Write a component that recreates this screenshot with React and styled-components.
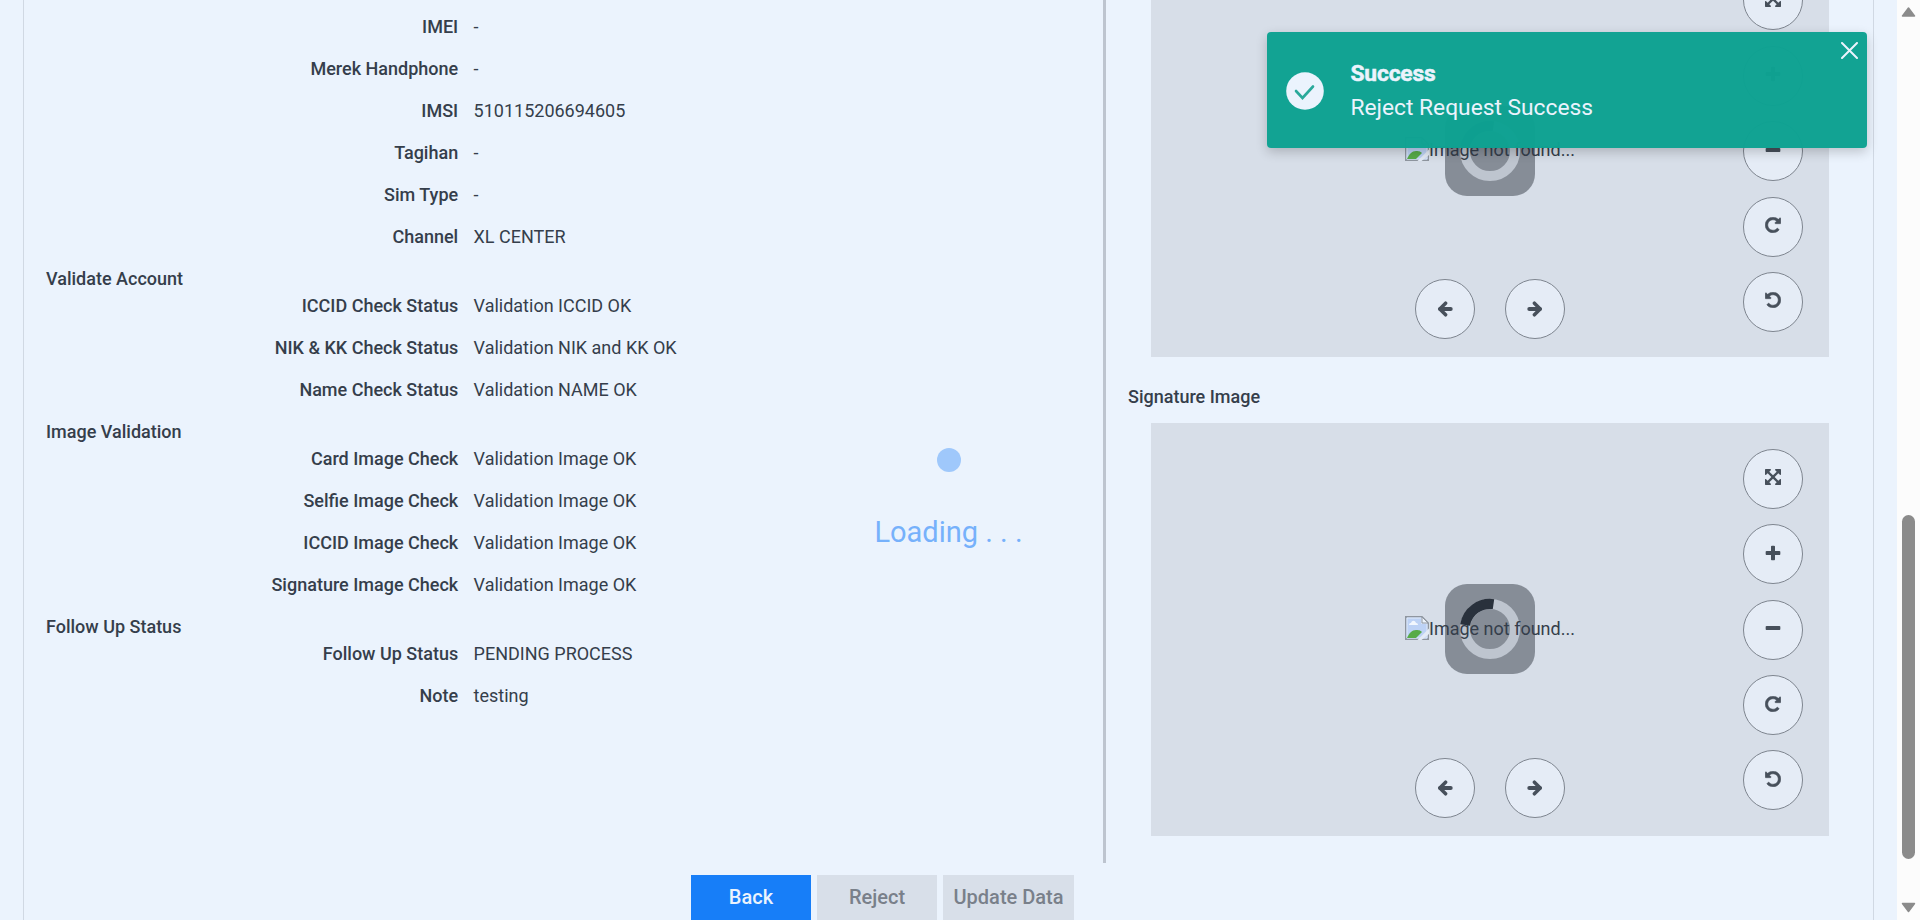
import React from "react";
import styled, { createGlobalStyle, css } from "styled-components";

const Global = createGlobalStyle`
  * { box-sizing: border-box; }
  html, body { margin: 0; height: 100%; overflow: hidden; }
  body { font-family: Roboto, "Liberation Sans", sans-serif; font-size: 18px; line-height: 27px; color: #353e4b; background: #ebf3fd; }
`;

const Page = styled.div`
  position: relative;
  display: flex;
  height: 920px;
  overflow: hidden;
`;
const Main = styled.main`
  flex: 1;
  padding: 0 23px 0 23px;
`;
const Card = styled.section`
  height: 920px;
  border: 1px solid #d0d8e3;
  border-width: 0 1px;
  overflow: hidden;
`;
const Columns = styled.div`
  display: flex;
  height: 863px;
  overflow: hidden;
`;
const Details = styled.div`
  width: 1082px;
  padding: 13px 22px 0;
  border-right: 3px solid #bdc4cf;
`;
const SectionTitle = styled.h2`
  margin: 0;
  font-size: 18px;
  line-height: 27px;
  font-weight: 500;
`;
const Row = styled.div`
  display: flex;
  gap: 15.4px;
  height: 42px;
`;
const Label = styled.div`
  width: 412.2px;
  text-align: right;
  font-weight: 500;
`;
const Value = styled.div``;

const Images = styled.div`
  flex: 1;
  padding: 0 22px;
  display: flex;
  flex-direction: column;
  margin-top: -55.55px;
`;
const ImageTitle = styled(SectionTitle)`
  margin: 25.5px 0 13px;
`;
const Viewer = styled.div`
  position: relative;
  flex: none;
  width: 678px;
  height: 413px;
  margin-left: 23px;
  background: #d7dee8;
`;
const Tools = styled.div`
  position: absolute;
  top: 26px;
  right: 26px;
  display: flex;
  flex-direction: column;
  gap: 15.37px;
`;
const Nav = styled.div`
  position: absolute;
  left: 264px;
  top: 334.75px;
  display: flex;
  gap: 30px;
`;
const RoundButton = styled.button`
  display: flex;
  align-items: center;
  justify-content: center;
  width: 60px;
  height: 60px;
  padding: 0 0 3px;
  border: 1px solid #7e858f;
  border-radius: 50%;
  background: #e5ecf6;
  color: #47505b;
  ${(p) => p.$centered && css`padding: 0;`}
`;
const Spinner = styled.div`
  position: absolute;
  left: 294px;
  top: 161.15px;
  width: 90px;
  height: 90px;
  border-radius: 22px;
  background: #868d97;
  svg { display: block; }
`;
const Missing = styled.div`
  position: absolute;
  left: 254px;
  top: 192px;
  display: flex;
  white-space: nowrap;
  svg { margin-top: 1px; }
`;

const Actions = styled.div`
  display: flex;
  gap: 6px;
  margin: 12px 0 0 667px;
`;
const ActionButton = styled.button`
  height: 56px;
  min-width: 120px;
  padding: 0 10.5px 11px;
  border: 0;
  font: 500 20px/45px Roboto, sans-serif;
  background: ${(p) => (p.$primary ? "#177ef8" : "#d8dfe9")};
  color: ${(p) => (p.$primary ? "#ebf3fd" : "#79808a")};
`;

const Loader = styled.div`
  position: absolute;
  left: 0;
  top: 448px;
  width: 1897px;
  display: flex;
  flex-direction: column;
  align-items: center;
  color: #76b1fb;
  font-size: 29px;
  line-height: 45px;
`;
const Dot = styled.span`
  width: 24px;
  height: 24px;
  margin-bottom: 38px;
  border-radius: 50%;
  background: #9fc8fb;
`;

const Toast = styled.aside`
  position: absolute;
  left: 1267px;
  top: 32px;
  width: 600px;
  height: 116px;
  display: flex;
  align-items: center;
  padding: 1px 0 0 18.5px;
  border-radius: 4px;
  background: rgba(14, 162, 145, 0.985);
  color: #ebf3fd;
  box-shadow: 0 4px 12px rgba(0, 0, 0, 0.2);
`;
const ToastText = styled.div`
  margin-left: 27px;
  font-size: 22.75px;
  line-height: 34px;
`;
const ToastTitle = styled.div`
  font-weight: 700;
  letter-spacing: -0.15px;
  -webkit-text-stroke: 0.5px currentColor;
`;
const Close = styled.button`
  position: absolute;
  top: 10px;
  right: 9.5px;
  padding: 0;
  border: 0;
  background: none;
  color: #ebf3fd;
  svg { display: block; }
`;

const ScrollTrack = styled.div`
  width: 23px;
  padding: 7px 0;
  display: flex;
  flex-direction: column;
  align-items: center;
  background: #fcfcfc;
`;
const Thumb = styled.div`
  width: 13px;
  height: 344px;
  margin: 498px 0 auto;
  border-radius: 7px;
  background: #8b8b8b;
`;

const paths = {
  expand: "M1283 413L928 768l355 355l144-144q29-31 70-14q39 17 39 59v448q0 26-19 45t-45 19h-448q-42 0-59-40q-17-39 14-69l144-144l-355-355l-355 355l144 144q31 30 14 69q-17 40-59 40H64q-26 0-45-19t-19-45v-448q0-42 40-59q39-17 69 14l144 144l355-355l-355-355l-144 144q-19 19-45 19q-12 0-24-5q-40-17-40-59V64q0-26 19-45T64 0h448q42 0 59 40q17 39-14 69L413 253l355 355l355-355l-144-144q-31-30-14-69q17-40 59-40h448q26 0 45 19t19 45v448q0 42-39 59q-13 5-25 5q-26 0-45-19z",
  plus: "M1472 672v192q0 40-28 68t-68 28H960v416q0 40-28 68t-68 28H672q-40 0-68-28t-28-68V960H160q-40 0-68-28t-28-68V672q0-40 28-68t68-28h416V160q0-40 28-68t68-28h192q40 0 68 28t28 68v416h416q40 0 68 28t28 68z",
  minus: "M1472 672v192q0 40-28 68t-68 28H160q-40 0-68-28t-28-68V672q0-40 28-68t68-28h1216q40 0 68 28t28 68z",
  redo: "M1536 128v448q0 26-19 45t-45 19h-448q-42 0-59-40q-17-39 14-69l138-138Q969 256 768 256q-104 0-198.500 40.500T406 406T296.500 569.500T256 768t40.500 198.500T406 1130t163.500 109.500T768 1280q119 0 225-52t179-147q7-10 23-12q15 0 25 9l137 138q9 8 9.500 20.500t-7.500 22.500q-109 132-264 204.500T768 1536q-156 0-298-61t-245-164t-164-245T0 768t61-298t164-245T470 61T768 0q147 0 284.500 55.500T1297 212l130-129q29-31 70-14q39 17 39 59z",
};

function Icon({ name, flip, heavy }) {
  return (
    <svg
      width="16"
      height="16"
      viewBox={heavy ? "-20 -20 1576 1576" : "0 0 1536 1536"}
      fill="currentColor"
      stroke="currentColor"
      strokeWidth={heavy ? 50 : 0}
    >
      <path d={paths[name]} transform={flip ? "matrix(-1 0 0 1 1536 0)" : undefined} />
    </svg>
  );
}

function Arrow({ flip }) {
  return (
    <svg width="16" height="16" viewBox="0 0 16 16" fill="none" stroke="currentColor" strokeLinecap="round" strokeLinejoin="round">
      <g transform={flip ? "matrix(-1 0 0 1 16 0)" : undefined}>
        <path d="M8.600 2.200L2.800 8l5.800 5.800" strokeWidth="3.500" />
        <path d="M3.200 8H13.700" strokeWidth="4" />
      </g>
    </svg>
  );
}

function BrokenImage() {
  return (
    <svg width="24" height="24" viewBox="0 0 24 24">
      <path d="M.75.75H17L23.250 7v16.250H.75z" fill="#bdd2f5" stroke="#8f969f" strokeWidth="1.500" />
      <path d="M2 2h14.500v5.500H22V22H2z" fill="none" stroke="#dfe9f8" />
      <path d="M2 22c2-5 5-8 9-8s5 1 6 2l-6 6z" fill="#57ab48" />
      <path d="M4 9c0-2 2-2 2-2c1-3 4-3 5 0c2 0 2 2 2 2z" fill="#f2f7fe" />
      <path d="M17 1v6h6z" fill="#eef4fc" stroke="#8f969f" />
      <path d="M24 12.500L12.500 24h4l7.500-6z" fill="#e4ebf5" />
    </svg>
  );
}

function ImageViewer() {
  return (
    <Viewer>
      <Spinner>
        <svg width="90" height="90" viewBox="0 0 90 90" fill="none" strokeWidth="10">
          <circle cx="45" cy="45" r="25" stroke="#bec5cf" />
          <path d="M20.100 41A25.200 25.200 0 0 1 48.500 20.150" stroke="#29313c" />
        </svg>
      </Spinner>
      <Missing><BrokenImage />Image not found...</Missing>
      <Tools>
        <RoundButton><Icon name="expand" /></RoundButton>
        <RoundButton><Icon name="plus" /></RoundButton>
        <RoundButton><Icon name="minus" /></RoundButton>
        <RoundButton><Icon name="redo" heavy /></RoundButton>
        <RoundButton><Icon name="redo" heavy flip /></RoundButton>
      </Tools>
      <Nav>
        <RoundButton $centered><Arrow /></RoundButton>
        <RoundButton $centered><Arrow flip /></RoundButton>
      </Nav>
    </Viewer>
  );
}

const sections = [
  { rows: [["IMEI", "-"], ["Merek Handphone", "-"], ["IMSI", "510115206694605"], ["Tagihan", "-"], ["Sim Type", "-"], ["Channel", "XL CENTER"]] },
  { title: "Validate Account", rows: [["ICCID Check Status", "Validation ICCID OK"], ["NIK & KK Check Status", "Validation NIK and KK OK"], ["Name Check Status", "Validation NAME OK"]] },
  { title: "Image Validation", rows: [["Card Image Check", "Validation Image OK"], ["Selfie Image Check", "Validation Image OK"], ["ICCID Image Check", "Validation Image OK"], ["Signature Image Check", "Validation Image OK"]] },
  { title: "Follow Up Status", rows: [["Follow Up Status", "PENDING PROCESS"], ["Note", "testing"]] },
];

export default function App() {
  return (
    <Page>
      <Global />
      <Main>
        <Card>
          <Columns>
            <Details>
              {sections.map((s, i) => (
                <React.Fragment key={i}>
                  {s.title && <SectionTitle>{s.title}</SectionTitle>}
                  {s.rows.map(([label, value]) => (
                    <Row key={label}><Label>{label}</Label><Value>{value}</Value></Row>
                  ))}
                </React.Fragment>
              ))}
            </Details>
            <Images>
              <ImageViewer />
              <ImageTitle>Signature Image</ImageTitle>
              <ImageViewer />
            </Images>
          </Columns>
          <Actions>
            <ActionButton $primary>Back</ActionButton>
            <ActionButton>Reject</ActionButton>
            <ActionButton>Update Data</ActionButton>
          </Actions>
        </Card>
      </Main>
      <ScrollTrack>
        <svg width="15" height="10" viewBox="0 0 15 10"><path d="M7.500 1L13.500 9H1.500z" fill="#8b8b8b" stroke="#8b8b8b" strokeLinejoin="round" strokeWidth="1.500" /></svg>
        <Thumb />
        <svg width="15" height="11" viewBox="0 0 15 10"><path d="M7.500 9L13.500 1H1.500z" fill="#8b8b8b" stroke="#8b8b8b" strokeLinejoin="round" strokeWidth="1.500" /></svg>
      </ScrollTrack>
      <Loader><Dot />Loading . . .</Loader>
      <Toast>
        <svg width="38" height="38" viewBox="0 0 38 38">
          <circle cx="19" cy="19" r="18.800" fill="#ebf3fd" />
          <path d="M10 19l6.500 7L27 14.500" fill="none" stroke="#2aa99b" strokeWidth="2.600" strokeLinecap="round" />
        </svg>
        <ToastText>
          <ToastTitle>Success</ToastTitle>
          <div>Reject Request Success</div>
        </ToastText>
        <Close aria-label="Close">
          <svg width="17" height="17" viewBox="0 0 17 17" stroke="currentColor" strokeWidth="2" strokeLinecap="round"><path d="M1 1l15 15M16 1L1 16" /></svg>
        </Close>
      </Toast>
    </Page>
  );
}
